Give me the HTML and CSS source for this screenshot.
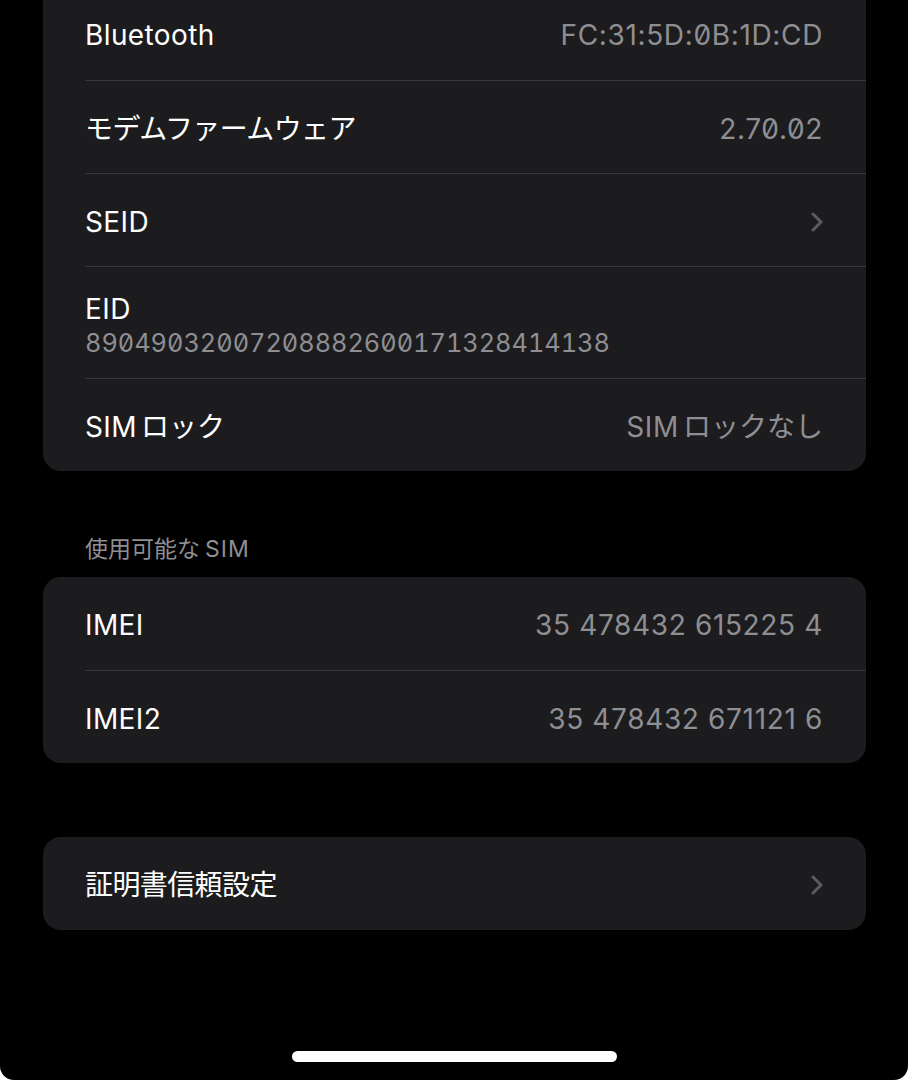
FILE: index.html
```html
<!DOCTYPE html>
<html lang="ja">
<head>
  <meta charset="UTF-8" />
  <meta name="viewport" content="width=device-width, initial-scale=1.0" />
  <title>情報</title>
  <link rel="stylesheet" href="styles.css">
</head>
<body>
  <div class="screen">
    <div class="card cut">
      <div class="row">
        <span class="label">Bluetooth</span>
        <span class="value">FC:31:5D:0B:1D:CD</span>
      </div>
      <div class="row">
        <span class="label ja">モデムファームウェア</span>
        <span class="value">2.70.02</span>
      </div>
      <div class="row">
        <span class="label">SEID</span>
        <svg class="chevron" width="12" height="20" viewBox="0 0 12 20">
          <path d="M2 2 L10 10 L2 18" />
        </svg>
      </div>
      <div class="row stacked">
        <span class="label">EID</span>
        <span class="eid">89049032007208882600171328414138</span>
      </div>
      <div class="row">
        <span class="label">SIM<span class="jp">ロック</span></span>
        <span class="value">SIM<span class="jp">ロックなし</span></span>
      </div>
    </div>

    <p class="section-title">使用可能な<span class="latin">SIM</span></p>
    <div class="card">
      <div class="row">
        <span class="label">IMEI</span>
        <span class="value">35 478432 615225 4</span>
      </div>
      <div class="row">
        <span class="label">IMEI2</span>
        <span class="value">35 478432 671121 6</span>
      </div>
    </div>

    <div class="card spaced">
      <div class="row">
        <span class="label ja">証明書信頼設定</span>
        <svg class="chevron" width="12" height="20" viewBox="0 0 12 20">
          <path d="M2 2 L10 10 L2 18" />
        </svg>
      </div>
    </div>

    <div class="home-bar"></div>
  </div>
</body>
</html>
```

FILE: styles.css
```css
* {
  margin: 0;
  padding: 0;
  box-sizing: border-box;
}
body {
  background: #fff;
  font-family: Inter, "Noto Sans CJK JP", sans-serif;
  color: #fff;
}
.screen {
  position: relative;
  width: 908px;
  height: 1080px;
  overflow: hidden;
  background: #000;
  border-radius: 0 0 14px 14px;
  padding: 0 42px 0 43px;
}
.card {
  background: #1c1c1e;
  border-radius: 18px;
  padding-left: 42px;
}
.card.cut {
  margin-top: -13px;
  border-radius: 0 0 18px 18px;
}
.card.spaced {
  margin-top: 74px;
}
.row {
  display: flex;
  align-items: center;
  justify-content: space-between;
  height: 93px;
  padding: 3px 43px 0 0;
}
.row + .row {
  border-top: 1px solid #38383a;
}
.row.stacked {
  flex-direction: column;
  align-items: flex-start;
  justify-content: flex-start;
  height: auto;
  padding: 25px 0 18px;
}
.label {
  font-size: 28px;
  line-height: 34px;
  letter-spacing: 0.4px;
}
.label.ja {
  letter-spacing: -0.6px;
}
.value {
  font-size: 28px;
  line-height: 34px;
  letter-spacing: 0.65px;
  color: #8e8e93;
  font-feature-settings: "zero" 1;
}
.jp {
  margin-left: 4px;
  letter-spacing: 0;
}
.eid {
  font-size: 25.3px;
  line-height: 34px;
  color: #8e8e93;
  font-feature-settings: "zero" 1, "tnum" 1;
}
.chevron path {
  fill: none;
  stroke: #5b5b60;
  stroke-width: 3;
  stroke-linecap: round;
  stroke-linejoin: round;
}
.section-title {
  padding: 62px 0 12px 42px;
  font-size: 23px;
  line-height: 32px;
  color: #8e8e93;
}
.section-title .latin {
  margin-left: 5px;
  letter-spacing: 1px;
}
.home-bar {
  position: absolute;
  left: 50%;
  bottom: 18px;
  width: 325px;
  height: 11px;
  margin-left: -162px;
  border-radius: 6px;
  background: #fff;
}
```
